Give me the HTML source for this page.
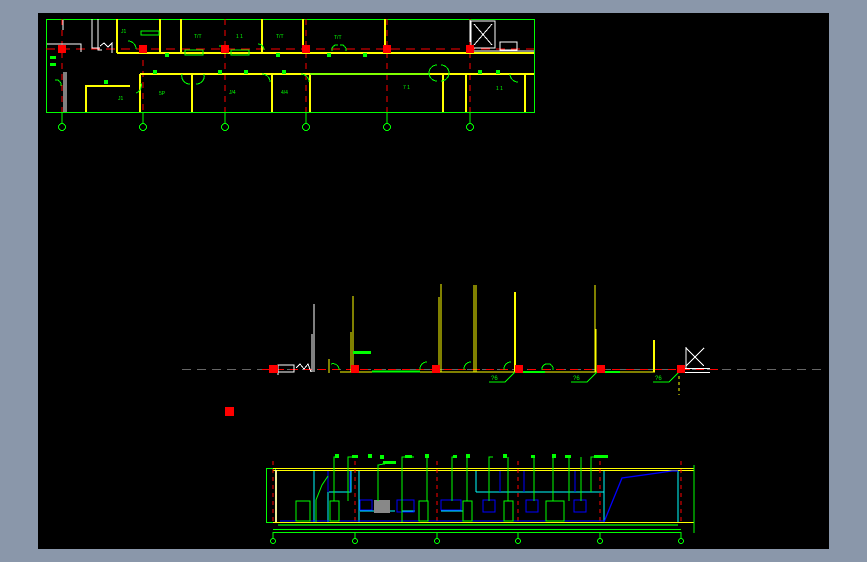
<!DOCTYPE html>
<html><head><meta charset="utf-8"><style>
html,body{margin:0;padding:0;background:#8a97aa;width:867px;height:562px;overflow:hidden}
svg{display:block}
text{font-family:"Liberation Sans",sans-serif;font-size:5px;fill:#0f0}
</style></head><body>
<svg width="867" height="562" viewBox="0 0 867 562" xmlns="http://www.w3.org/2000/svg" shape-rendering="crispEdges">
<rect x="38" y="13" width="791" height="536" fill="#000"/>
<!-- TOP PLAN -->
<g fill="none" stroke-width="1.2">
<rect x="46.5" y="19.5" width="488" height="93" stroke="#0f0"/>
<line x1="46" y1="49" x2="534" y2="49" stroke="#f00" stroke-dasharray="9,6"/>
<g stroke="#f00" stroke-dasharray="6,5">
<line x1="62" y1="19" x2="62" y2="112"/><line x1="225" y1="19" x2="225" y2="112"/><line x1="306" y1="19" x2="306" y2="112"/><line x1="387" y1="19" x2="387" y2="112"/><line x1="470" y1="19" x2="470" y2="112"/><line x1="143" y1="60" x2="143" y2="112"/>
</g>
<g stroke="#ff0" stroke-width="1.6">
<line x1="117" y1="53" x2="262" y2="53"/><line x1="262" y1="53" x2="534" y2="53"/>
<line x1="140" y1="74" x2="534" y2="74"/>
<line x1="117" y1="19" x2="117" y2="53"/><line x1="160" y1="19" x2="160" y2="53"/><line x1="181" y1="19" x2="181" y2="53"/><line x1="262" y1="19" x2="262" y2="53"/><line x1="303" y1="19" x2="303" y2="53"/><line x1="385" y1="19" x2="385" y2="53"/>
<line x1="140" y1="74" x2="140" y2="112"/><line x1="192" y1="74" x2="192" y2="112"/><line x1="272" y1="74" x2="272" y2="112"/><line x1="310" y1="74" x2="310" y2="112"/><line x1="443" y1="74" x2="443" y2="112"/><line x1="466" y1="74" x2="466" y2="112"/><line x1="525" y1="74" x2="525" y2="112"/>
<polyline points="86,112 86,86 130,86"/>
</g>
<g stroke="#fff" stroke-width="1">
<polyline points="47,44 81,44 81,52"/><line x1="63" y1="20" x2="63" y2="30"/><line x1="64" y1="72" x2="64" y2="112"/><line x1="66" y1="72" x2="66" y2="112"/>
<polyline points="92,19 92,48 100,48"/><polyline points="98,19 98,50 102,50"/>
<polyline points="100,46 104,43 108,47 112,43 112,53"/>
<rect x="471" y="21" width="24" height="27"/><line x1="474" y1="24" x2="492" y2="45"/><line x1="492" y1="24" x2="474" y2="45"/>
<rect x="500" y="42" width="17" height="8"/><line x1="466" y1="51" x2="534" y2="51"/><line x1="470" y1="20" x2="470" y2="42"/>
</g>
<g stroke="#0f0" stroke-width="1">
<rect x="141" y="31" width="18" height="4"/><rect x="185" y="50" width="18" height="5"/><rect x="231" y="50" width="18" height="5"/>
<line x1="310" y1="74" x2="430" y2="74"/>
<path d="M128,41 a8,8 0 0 1 8,8 M219,46 a8,8 0 0 1 8,8 M258,44 a6,6 0 0 1 6,6 M340,45 a5,5 0 0 1 6,6 M338,45 a5,5 0 0 0 -6,6 M182,74 a8,8 0 0 0 8,10 M204,74 a8,8 0 0 1 -8,10 M262,74 a8,8 0 0 1 8,8 M301,74 a8,8 0 0 1 8,8 M141,83 a8,8 0 0 1 -5,10 M437,65 a8,8 0 0 0 0,16 M441,65 a8,8 0 0 1 0,16 M510,74 a8,8 0 0 0 8,8 M55,80 a5,5 0 0 1 6,6"/>
<g stroke-width="1.1"><line x1="62" y1="112" x2="62" y2="123"/><line x1="143" y1="112" x2="143" y2="123"/><line x1="225" y1="112" x2="225" y2="123"/><line x1="306" y1="112" x2="306" y2="123"/><line x1="387" y1="112" x2="387" y2="123"/><line x1="470" y1="112" x2="470" y2="123"/></g>
<circle cx="62" cy="127" r="3.5"/><circle cx="143" cy="127" r="3.5"/><circle cx="225" cy="127" r="3.5"/><circle cx="306" cy="127" r="3.5"/><circle cx="387" cy="127" r="3.5"/><circle cx="470" cy="127" r="3.5"/>
</g>
</g>
<g fill="#f00"><rect x="58" y="45" width="8" height="8"/><rect x="139" y="45" width="8" height="8"/><rect x="221" y="45" width="8" height="8"/><rect x="302" y="45" width="8" height="8"/><rect x="383" y="45" width="8" height="8"/><rect x="466" y="45" width="8" height="8"/></g>
<g fill="#0f0"><rect x="104" y="80" width="4" height="4"/><rect x="153" y="70" width="4" height="4"/><rect x="218" y="70" width="4" height="4"/><rect x="244" y="70" width="4" height="4"/><rect x="282" y="70" width="4" height="4"/><rect x="478" y="70" width="4" height="4"/><rect x="496" y="70" width="4" height="4"/><rect x="165" y="53" width="4" height="4"/><rect x="276" y="53" width="4" height="4"/><rect x="327" y="53" width="4" height="4"/><rect x="363" y="53" width="4" height="4"/>
<rect x="50" y="56" width="6" height="3"/><rect x="50" y="63" width="6" height="3"/></g>
<text x="121" y="33">J1</text><text x="194" y="38">T/T</text><text x="236" y="38">1 1</text><text x="276" y="38">T/T</text><text x="334" y="39">T/T</text><text x="118" y="100">J1</text><text x="159" y="95">5P</text><text x="229" y="94">J/4</text><text x="281" y="94">4/4</text><text x="403" y="89">7 1</text><text x="496" y="90">1 1</text>
<!-- MIDDLE -->
<line x1="182" y1="369.5" x2="822" y2="369.5" stroke="#666" stroke-dasharray="9,6"/>
<g fill="none">
<line x1="262" y1="369.5" x2="720" y2="369.5" stroke="#f00" stroke-dasharray="8,6"/>
<g stroke="#ff0" stroke-width="1.3">
<line x1="353" y1="296" x2="353" y2="372"/><line x1="351" y1="332" x2="351" y2="372"/><line x1="439" y1="297" x2="439" y2="372"/><line x1="441" y1="284" x2="441" y2="372"/><line x1="474" y1="285" x2="474" y2="372"/><line x1="476" y1="285" x2="476" y2="372"/><line x1="595" y1="285" x2="595" y2="372"/><line x1="596" y1="329" x2="596" y2="372"/><line x1="329" y1="359" x2="329" y2="373"/>
<line x1="340" y1="372" x2="655" y2="372"/>
</g>
<line x1="515" y1="292" x2="515" y2="372" stroke="#ff0" stroke-width="2"/><line x1="654" y1="340" x2="654" y2="372" stroke="#ff0" stroke-width="2"/>
<line x1="679" y1="370" x2="679" y2="395" stroke="#ff0" stroke-dasharray="3,3"/>
<g stroke="#0f0" stroke-width="1"><line x1="372" y1="371.5" x2="420" y2="371.5" stroke-width="2"/><line x1="520" y1="372" x2="545" y2="372" stroke-width="2"/><line x1="605" y1="372" x2="620" y2="372" stroke-width="2"/>
<path d="M331,364 a6,6 0 0 1 8,6 M420,370 a7,7 0 0 1 7,-8 M464,370 a7,7 0 0 1 7,-8 M504,370 a7,7 0 0 1 7,-8 M547,364 a5,5 0 0 1 6,6 M547,364 a5,5 0 0 0 -5,6"/>
<polyline points="489,382 505,382 515,372"/><polyline points="571,382 587,382 597,372"/><polyline points="653,382 669,382 679,372"/>
</g>
<g stroke="#fff" stroke-width="1"><line x1="314" y1="304" x2="314" y2="372"/><line x1="312" y1="334" x2="312" y2="372"/><polyline points="278,375 278,365 294,365 294,372 275,372"/><polyline points="296,368 300,364 304,369 308,364 311,372"/>
<line x1="686" y1="348" x2="704" y2="366"/><line x1="704" y1="348" x2="686" y2="366"/><line x1="686" y1="347" x2="686" y2="368"/><line x1="680" y1="368.5" x2="710" y2="368.5"/><line x1="680" y1="372.5" x2="710" y2="372.5"/></g>
</g>
<rect x="353" y="351" width="18" height="3" fill="#0f0"/>
<g fill="#f00"><rect x="269" y="365" width="9" height="8"/><rect x="351" y="365" width="8" height="8"/><rect x="432" y="365" width="8" height="8"/><rect x="515" y="365" width="8" height="8"/><rect x="597" y="365" width="8" height="8"/><rect x="677" y="365" width="8" height="8"/><rect x="225" y="407" width="9" height="9"/></g>
<text x="491" y="380" style="font-size:6px">?6</text><text x="573" y="380" style="font-size:6px">?6</text><text x="655" y="380" style="font-size:6px">?6</text>
<!-- BOTTOM SECTION -->
<g fill="none" stroke-width="1">
<rect x="266.5" y="468.5" width="9" height="54" stroke="#0f0"/>
<line x1="273" y1="468.5" x2="694" y2="468.5" stroke="#ff0"/><line x1="273" y1="470.5" x2="694" y2="470.5" stroke="#ff0"/><line x1="273" y1="522.5" x2="694" y2="522.5" stroke="#ff0"/>
<line x1="276" y1="470" x2="276" y2="522" stroke="#ee9" stroke-width="2"/>
<g stroke="#f00" stroke-dasharray="4,4"><line x1="273" y1="461" x2="273" y2="525"/><line x1="355" y1="461" x2="355" y2="525"/><line x1="437" y1="461" x2="437" y2="525"/><line x1="518" y1="461" x2="518" y2="525"/><line x1="600" y1="461" x2="600" y2="525"/><line x1="681" y1="461" x2="681" y2="525"/></g>
<g stroke="#0ff"><line x1="314" y1="471" x2="314" y2="522"/><line x1="328" y1="471" x2="328" y2="522"/><line x1="359" y1="471" x2="359" y2="522"/><polyline points="329,492 351,492 351,471"/><line x1="476" y1="492" x2="604" y2="492"/><line x1="476" y1="471" x2="476" y2="492"/><line x1="604" y1="471" x2="604" y2="522"/><line x1="678" y1="471" x2="678" y2="522"/><line x1="360" y1="511" x2="395" y2="511"/><line x1="402" y1="511" x2="415" y2="511"/><line x1="441" y1="511" x2="463" y2="511"/></g>
<g stroke="#00f" stroke-width="1.3"><line x1="280" y1="521" x2="604" y2="521"/><line x1="328" y1="471" x2="328" y2="492"/><line x1="350" y1="471" x2="350" y2="492"/><line x1="500" y1="471" x2="500" y2="492"/><line x1="524" y1="471" x2="524" y2="492"/><line x1="575" y1="471" x2="575" y2="492"/>
<rect x="360" y="500" width="12" height="10"/><rect x="397" y="500" width="17" height="12"/><rect x="441" y="500" width="20" height="10"/><rect x="483" y="500" width="12" height="12"/><rect x="526" y="500" width="12" height="12"/><rect x="574" y="500" width="12" height="12"/>
<polyline points="604,522 622,478 672,471 678,471" shape-rendering="auto"/></g>
<rect x="374" y="500" width="16" height="13" fill="#888" stroke="none"/>
<g stroke="#0f0"><line x1="273" y1="529.5" x2="681" y2="529.5"/><line x1="273" y1="532.5" x2="681" y2="532.5"/><line x1="694" y1="465" x2="694" y2="533"/>
<rect x="296" y="501" width="14" height="20"/><rect x="330" y="501" width="9" height="20"/><rect x="419" y="501" width="9" height="20"/><rect x="463" y="501" width="9" height="20"/><rect x="504" y="501" width="9" height="20"/><rect x="546" y="501" width="18" height="20"/>
<polyline points="334,501 334,457 338,457"/><polyline points="348,501 348,457 354,457"/><polyline points="378,501 378,465 395,462"/><polyline points="402,522 402,457 414,457"/><polyline points="427,501 427,457"/><polyline points="452,501 452,457 457,457"/><polyline points="467,501 467,457"/><polyline points="489,501 489,457 493,457"/><polyline points="508,501 508,457"/><polyline points="534,501 534,457"/><polyline points="553,501 553,457"/><polyline points="569,501 569,457"/><polyline points="581,501 581,457"/><polyline points="591,492 591,457 608,457"/><polyline points="316,522 316,500 322,485 328,476" shape-rendering="auto"/>
<line x1="273" y1="532" x2="273" y2="538"/><line x1="355" y1="532" x2="355" y2="538"/><line x1="437" y1="532" x2="437" y2="538"/><line x1="518" y1="532" x2="518" y2="538"/><line x1="600" y1="532" x2="600" y2="538"/><line x1="681" y1="532" x2="681" y2="538"/>
<circle cx="273" cy="541" r="2.5"/><circle cx="355" cy="541" r="2.5"/><circle cx="437" cy="541" r="2.5"/><circle cx="518" cy="541" r="2.5"/><circle cx="600" cy="541" r="2.5"/><circle cx="681" cy="541" r="2.5"/></g>
</g>
<g fill="#0f0"><rect x="335" y="454" width="4" height="4"/><rect x="352" y="455" width="6" height="3"/><rect x="368" y="454" width="4" height="4"/><rect x="380" y="455" width="4" height="4"/><rect x="383" y="461" width="13" height="3"/><rect x="405" y="455" width="7" height="3"/><rect x="425" y="454" width="4" height="4"/><rect x="453" y="455" width="4" height="3"/><rect x="466" y="454" width="4" height="4"/><rect x="503" y="454" width="4" height="4"/><rect x="531" y="455" width="4" height="3"/><rect x="552" y="454" width="4" height="4"/><rect x="565" y="455" width="6" height="3"/><rect x="594" y="455" width="14" height="3"/><rect x="278" y="524" width="400" height="2" opacity="0.6"/></g>
</svg>
</body></html>
